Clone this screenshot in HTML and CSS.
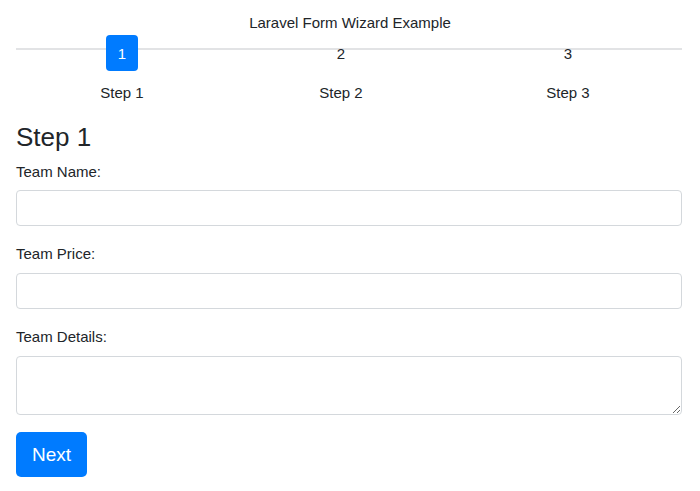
FILE: index.html
```html
<!DOCTYPE html>
<html lang="en">
<head>
<meta charset="utf-8">
<title>Laravel Form Wizard Example</title>
<link rel="stylesheet" href="styles.css">
</head>
<body>
<div class="container">
  <h1 class="page-title">Laravel Form Wizard Example</h1>
  <div class="stepwizard">
    <div class="step">
      <span class="step-btn active">1</span>
      <p class="step-label">Step 1</p>
    </div>
    <div class="step">
      <span class="step-btn">2</span>
      <p class="step-label">Step 2</p>
    </div>
    <div class="step">
      <span class="step-btn">3</span>
      <p class="step-label">Step 3</p>
    </div>
  </div>
  <form class="wizard-form">
    <h3 class="step-title">Step 1</h3>
    <div class="form-group">
      <label class="form-label" for="name">Team Name:</label>
      <input class="form-control" id="name" type="text">
    </div>
    <div class="form-group">
      <label class="form-label" for="price">Team Price:</label>
      <input class="form-control" id="price" type="text">
    </div>
    <div class="form-group">
      <label class="form-label" for="detail">Team Details:</label>
      <textarea class="form-control textarea" id="detail"></textarea>
    </div>
    <button class="btn-next" type="button">Next</button>
  </form>
</div>
</body>
</html>
```
FILE: styles.css
```css
* { box-sizing: border-box; }
html, body { margin: 0; padding: 0; background: #fff; }
body {
  font-family: "Liberation Sans", Arial, Helvetica, sans-serif;
  font-size: 15px;
  line-height: 22px;
  color: #212529;
}
.container {
  padding: 12px 18px 0 16px;
}
.page-title {
  margin: 0 0 1px;
  font-size: 15px;
  font-weight: 400;
  line-height: 22px;
  text-align: center;
  padding-left: 2px;
}
.stepwizard {
  position: relative;
  display: grid;
  grid-template-columns: 212px 226px 228px;
}
.stepwizard::before {
  content: "";
  position: absolute;
  left: 0;
  right: 0;
  top: 13px;
  height: 2px;
  background: #e2e3e5;
}
.step {
  position: relative;
  display: flex;
  flex-direction: column;
  align-items: center;
}
.step-btn {
  display: flex;
  align-items: center;
  justify-content: center;
  width: 32px;
  height: 36px;
  padding-top: 2px;
  border-radius: 4px;
  font-size: 15px;
  color: #212529;
}
.step-btn.active {
  background: #007bff;
  color: #fff;
}
.step-label {
  margin: 11px 0 0;
  line-height: 22px;
}
.wizard-form {
  margin-top: 18px;
}
.step-title {
  margin: 0 0 8px;
  font-size: 26px;
  font-weight: 500;
  line-height: 31px;
}
.form-group {
  display: flex;
  flex-direction: column;
  margin-bottom: 17px;
}
.form-label {
  margin-bottom: 8px;
  line-height: 22px;
}
.form-group:first-of-type .form-label { margin-bottom: 7px; }
.form-control {
  display: block;
  width: 100%;
  height: 36px;
  border: 1px solid #d4d8dc;
  border-radius: 4px;
  background: #fff;
  font: inherit;
  padding: 6px 12px;
}
.textarea {
  height: 59px;
  resize: vertical;
}
.btn-next {
  display: block;
  width: 71px;
  height: 45px;
  border: none;
  border-radius: 5px;
  background: #007bff;
  color: #fff;
  font-family: inherit;
  font-size: 19px;
  padding: 0;
}
```
